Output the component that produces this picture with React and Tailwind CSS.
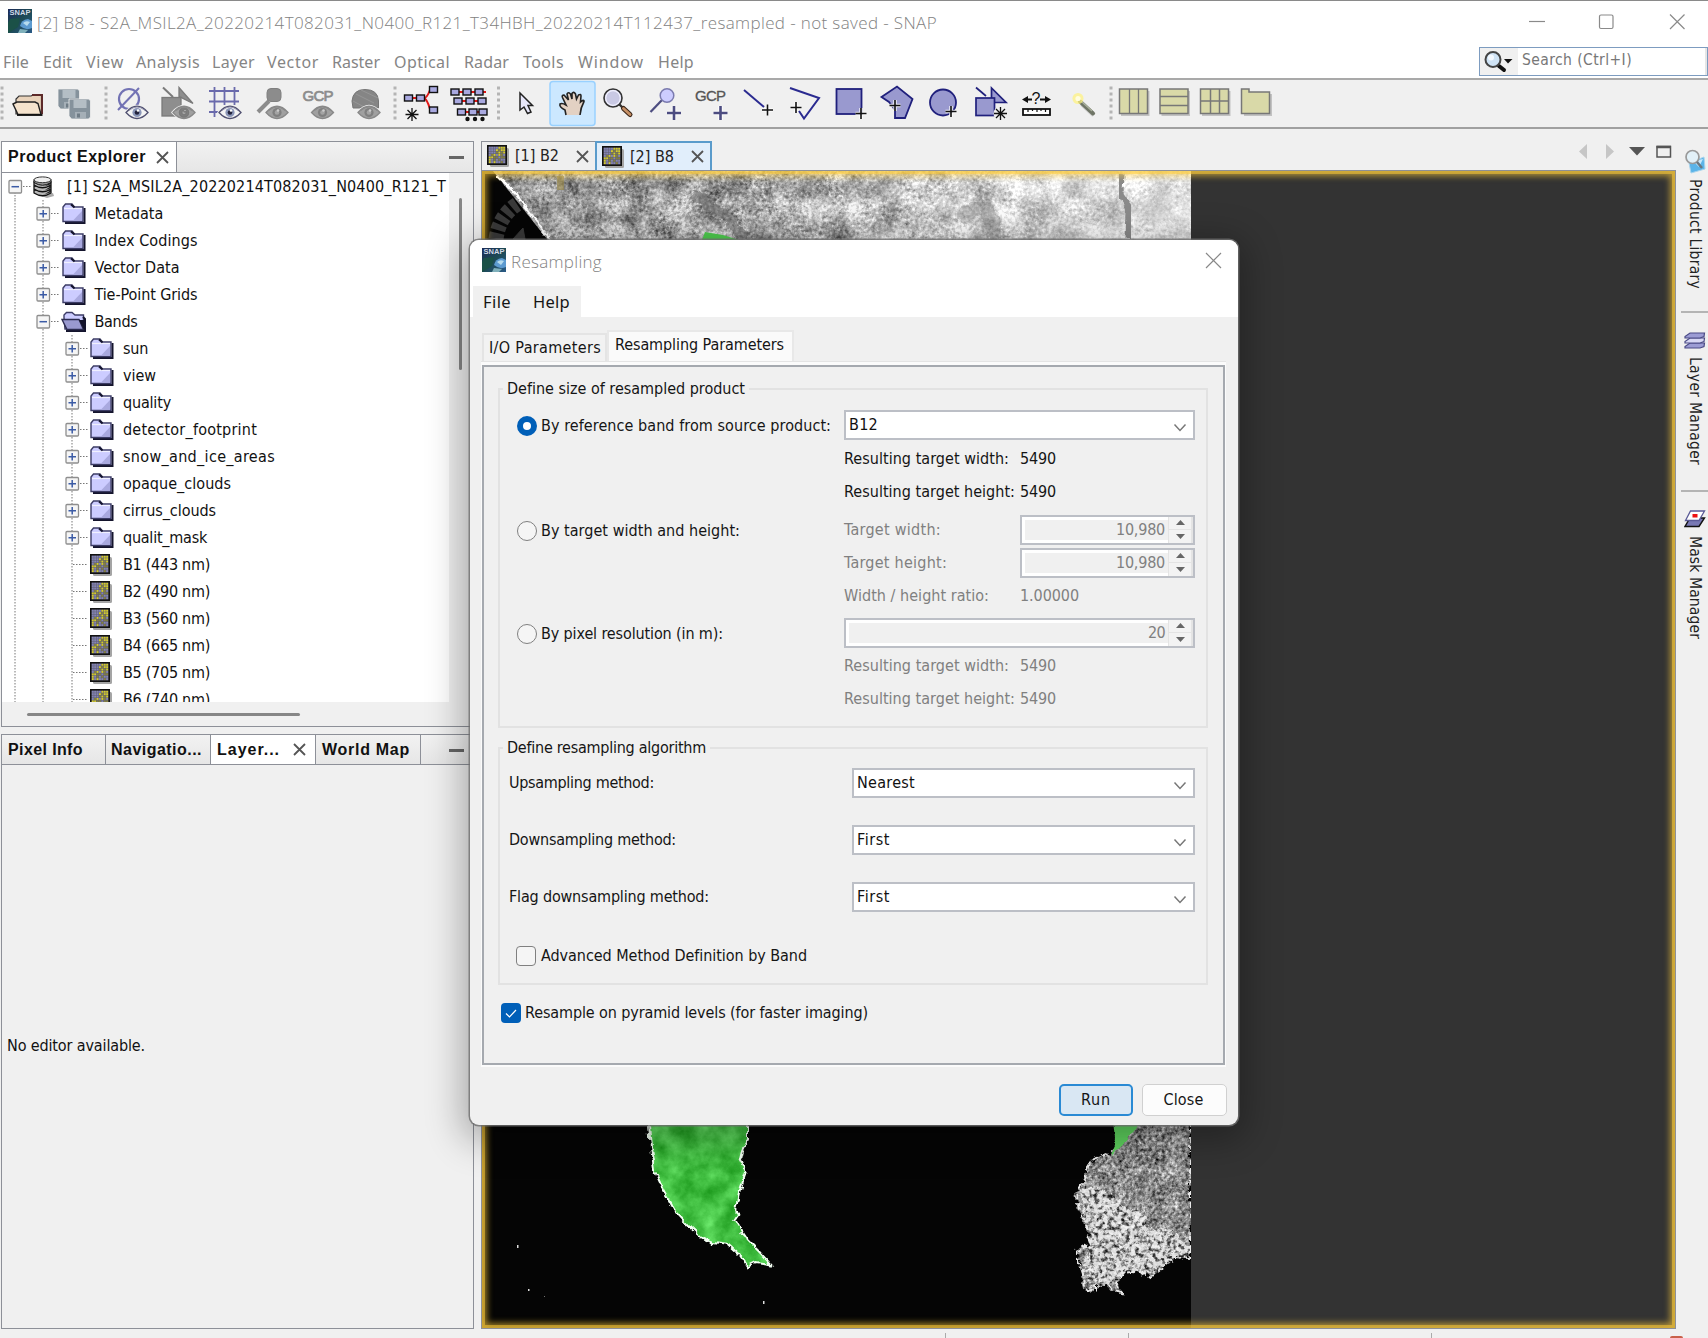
import React, { useLayoutEffect, useRef } from "react";

const UI = "font-['DejaVu_Sans_Condensed','DejaVu_Sans',sans-serif] [font-stretch:condensed]";

/* Text that spreads its letters evenly over a given length. */
function Fit({ w, children, className = "", vertical = false }) {
  const ref = useRef(null);
  useLayoutEffect(() => {
    const el = ref.current;
    el.style.letterSpacing = "0px";
    const r = el.getBoundingClientRect();
    const natural = vertical ? r.height : r.width;
    el.style.letterSpacing = (w - natural) / String(children).length + "px";
  }, [w, children, vertical]);
  return (
    <span ref={ref} className={"inline-block shrink-0 whitespace-pre " + className}>
      {children}
    </span>
  );
}

/* ---------- small icons ---------- */
function SnapLogo() {
  return (
    <svg width="24" height="24" viewBox="0 0 24 24" className="shrink-0">
      <defs>
        <linearGradient id="snapg" x1="0" y1="0" x2="1" y2="1">
          <stop offset="0" stopColor="#1c2b57" />
          <stop offset="0.5" stopColor="#1d4a55" />
          <stop offset="1" stopColor="#2a5a86" />
        </linearGradient>
      </defs>
      <rect width="24" height="24" fill="url(#snapg)" />
      <path d="M2 10 L12 9 L10 18 L0 24 L0 14Z" fill="#1b5147" />
      <path d="M12 17 Q13 11 20 10 L24 12 L24 19 Q18 22 12 17Z" fill="#5d9bd0" />
      <path d="M15 14 Q18 11 22 13 L19 17Z" fill="#b7dcee" />
      <path d="M12 20 L20 21 L17 24 L10 24Z" fill="#7fb0bb" />
      <text x="12" y="6" fontSize="7.5" fontWeight="bold" textAnchor="middle" fill="#cfd8e6" fontFamily="Liberation Sans">SNAP</text>
    </svg>
  );
}

function Folder() {
  return (
    <svg width="24" height="21" viewBox="0 0 24 21" className="shrink-0">
      <path d="M3 20 L22.5 20 L22.5 5" stroke="#14142c" strokeWidth="2" fill="none" />
      <path d="M1 18.5 V4 L3.5 1 H10 L12.5 4 H21 V18.5Z" fill="#ccccff" stroke="#3c3c66" strokeWidth="1.4" />
      <path d="M11 17.5 L20 8 V17.5Z" fill="#a9a9df" />
      <path d="M2 5.5 H20" stroke="#f0f0ff" strokeWidth="1.2" />
      <path d="M9 1.5 L12.5 4.5" stroke="#14142c" strokeWidth="2" />
    </svg>
  );
}

function FolderOpen() {
  return (
    <svg width="26" height="21" viewBox="0 0 26 21" className="shrink-0">
      <path d="M3 7 V4 L5.500 1.500 H11 L14 4 H22.500 V18 H4Z" fill="#ccccff" stroke="#3c3c66" strokeWidth="1.4" />
      <path d="M22 6 L24 8 V20 H5" fill="none" stroke="#14142c" strokeWidth="2" />
      <path d="M1 8.500 H18 L22.500 18.500 H6Z" fill="#9a9ad0" stroke="#2c2c50" strokeWidth="1.4" />
      <path d="M18 9 L23 19 V9Z" fill="#14142c" />
    </svg>
  );
}

const CELLS = ["bbbbyyy", "bbbyoyy", "bbboyoy", "boybyob", "yyooboo", "ybobobb", "ybybbob"];
const CELL_FILL = { b: "#8484b4", y: "#d6cd2a", o: "#87833c" };
function Band() {
  return (
    <svg width="22" height="22" viewBox="0 0 22 22" className="shrink-0">
      <rect x="3" y="3" width="19" height="19" rx="1.500" fill="#a5a5a5" />
      <rect x="0" y="0" width="20" height="20" fill="#111" />
      <rect x="1.600" y="1.600" width="16.800" height="16.800" fill="#5e5e70" />
      {CELLS.map((line, r) =>
        line.split("").map((c, i) => (
          <rect key={r + "-" + i} x={1.8 + i * 2.4} y={1.8 + r * 2.4} width="1.900" height="1.900" fill={CELL_FILL[c]} />
        ))
      )}
    </svg>
  );
}

function Database() {
  return (
    <svg width="22" height="22" viewBox="0 0 22 22" className="shrink-0">
      <path d="M8 20 L20 17 L21 20 L14 22Z" fill="#aaa" />
      {[14, 10, 6].map((y) => (
        <g key={y}>
          <path d={`M1 ${y} v3 q8.500 5.500 17 0 v-3Z`} fill="#b9b9b9" stroke="#111" strokeWidth="1.300" />
          <path d={`M12 ${y + 4} q4 -.5 6 -2 v-2Z`} fill="#222" />
        </g>
      ))}
      <path d="M1 3.500 v3 q8.500 5.500 17 0 v-3Z" fill="#999" stroke="#111" />
      <ellipse cx="9.500" cy="3.800" rx="8.500" ry="2.900" fill="#eee" stroke="#333" />
    </svg>
  );
}

function Cross({ size = 13, className = "" }) {
  return (
    <svg width={size} height={size} viewBox="0 0 13 13" className={"shrink-0 " + className}>
      <path d="M1 1 L12 12 M12 1 L1 12" stroke="#555" strokeWidth="1.800" />
    </svg>
  );
}

/* ---------- toolbar ---------- */
const Eye = ({ x, y, gray }) => (
  <g transform={`translate(${x} ${y})`}>
    <path d="M-11 0 Q0 -12.500 11 0 Q0 12 -11 0Z" fill={gray ? "#a0a0a0" : "#f4f4f4"} stroke="#f0f0f0" strokeWidth="3" />
    <path d="M-11 0 Q0 -12.500 11 0 Q0 12 -11 0Z" fill={gray ? "#a0a0a0" : "#f4f4f4"} stroke={gray ? "#888" : "#505070"} strokeWidth="1.300" />
    <circle r="4.600" fill={gray ? "#808080" : "#8a96b8"} />
    <circle r="2.300" fill={gray ? "#a4a4a4" : "#23233c"} />
    <circle cx="1" cy="-2" r="1.300" fill={gray ? "#ccc" : "#fff"} />
    <path d="M-8 -2 Q0 -9 8 -2" fill="none" stroke={gray ? "#8a8a8a" : "#9a9ab4"} />
  </g>
);
const Plus = ({ x, y, c = "#111", s = 5.5, w = 1.6 }) => (
  <g>
    <path d={`M${x - s} ${y} h${2 * s} M${x} ${y - s} v${2 * s}`} stroke="#fff" strokeWidth={w + 2} opacity="0.8" />
    <path d={`M${x - s} ${y} h${2 * s} M${x} ${y - s} v${2 * s}`} stroke={c} strokeWidth={w} />
  </g>
);
const Star = ({ x, y }) => (
  <path d={`M${x - 6.500} ${y} h13 M${x} ${y - 6.500} v13 M${x - 4.500} ${y - 4.500} l9 9 M${x + 4.500} ${y - 4.500} l-9 9`} stroke="#111" strokeWidth="1.300" />
);
const Node = ({ x, y }) => <rect x={x - 4} y={y - 3} width="8" height="6" fill="#a9a9e0" stroke="#111" strokeWidth="1.400" />;
const Grip = ({ x }) => (
  <g fill="#b4b4b4">
    {[88, 94, 100, 106, 112, 118].map((y) => (
      <rect key={y} x={x - 1.500} y={y - 1.500} width="3" height="3" />
    ))}
  </g>
);
const GridBtn = ({ x, children }) => (
  <g>
    <path d={`M${x + 2} 115 h27.500 v-24`} stroke="#c2c2c2" strokeWidth="2" fill="none" />
    <rect x={x + 0.5} y="89" width="28" height="24.500" fill="#d9d9a8" stroke="#777" strokeWidth="1.500" />
    {children}
  </g>
);

const TOOLS = [
  [0, 8, <Grip x={2} />],
  [8, 44, (
    <g>
      <path d="M16 103 V99 L19 96 H31 L33 95 H41.500 V114 H16Z" fill="#e9d3bb" stroke="#333" strokeWidth="1.200" />
      <path d="M32 95 H42 V114" fill="none" stroke="#5d2a2a" strokeWidth="2" />
      <path d="M13 104 L17 102 H35 L38 103.500 L41 114.500 H18Z" fill="#f5e3cd" stroke="#222" strokeWidth="1.400" />
      <path d="M17 115 H42.500" stroke="#111" strokeWidth="1.800" />
    </g>
  )],
  [52, 48, (
    <g>
      {[[58, 89], [69, 99]].map(([x, y]) => (
        <g key={x}>
          <path d={`M${x} ${y} h20 l1.500 2 v16 l-2 2 h-17 l-2.500 -3Z`} fill="#85929c" stroke="#f0f0f0" strokeWidth="0.800" />
          <rect x={x + 4.500} y={y + 1} width="13" height="8" fill="#b4bec5" />
          <rect x={x + 6} y={y + 13} width="11" height="6" fill="#a5afb7" />
          <rect x={x + 8} y={y + 14.500} width="3" height="4" fill="#6f7c86" />
        </g>
      ))}
    </g>
  )],
  [100, 12, <Grip x={106} />],
  [112, 40, (
    <g>
      <circle cx="129" cy="99" r="10" fill="none" stroke="#7272b4" strokeWidth="2.200" />
      <path d="M118 110 L139 88" stroke="#7272b4" strokeWidth="2" />
      <Eye x={137} y={112.500} />
    </g>
  )],
  [152, 48, (
    <g fill="#8e8e8e" stroke="#7a7a7a" strokeWidth="1.300">
      <path d="M163 87.500 L173 97" strokeWidth="2" />
      <path d="M179 87.500 V97 H180 L193 103.500Z" />
      <rect x="162" y="97.500" width="19" height="18.500" />
      <Eye x={184} y={112.500} gray />
    </g>
  )],
  [200, 48, (
    <g>
      <path d="M209 91 H239 M209 101.500 H239 M209 112 H218 M214.500 87 V117 M224.500 87 V105 M234.500 87 V105" stroke="#6a6aac" strokeWidth="1.800" fill="none" />
      <Eye x={230} y={112.500} />
    </g>
  )],
  [248, 48, (
    <g>
      <rect x="267" y="88.500" width="14" height="13" rx="4" fill="#8c8c8c" stroke="#808080" />
      <path d="M269 101 L258 112" stroke="#8c8c8c" strokeWidth="4" />
      <Eye x={277} y={112.500} gray />
    </g>
  )],
  [296, 44, (
    <g>
      <text x="318" y="100.500" fontSize="15" textAnchor="middle" fontFamily="Liberation Sans" fill="#8c8c8c" stroke="#8c8c8c" strokeWidth="0.700" textLength="31">GCP</text>
      <Eye x={322.500} y={112.500} gray />
    </g>
  )],
  [340, 50, (
    <g>
      <path d="M352 101 Q353 89.500 365 89.500 Q378 89.500 378.500 101 V108 H353Z" fill="#858585" stroke="#757575" />
      <path d="M356 94 L374 103 M353 101 L366 108 M361 90 L378 98" stroke="#969696" />
      <Eye x={369} y={112.500} gray />
    </g>
  )],
  [390, 10, <Grip x={395} />],
  [400, 48, (
    <g>
      <path d="M408 98 H424 Q427 98 430 90 H434 M424 98 Q427 99 430 109 H434" stroke="#e01818" strokeWidth="2" fill="none" />
      <Node x={408.500} y={98} /><Node x={420.500} y={98} /><Node x={433.500} y={89.500} /><Node x={433.500} y={110} />
      <Star x={412} y={114.500} />
    </g>
  )],
  [448, 45, (
    <g>
      <path d="M452 92 H486 M455 101 H486 M460 112 H486" stroke="#e01818" strokeWidth="2" />
      {[455, 467, 479].map((x) => <Node key={x} x={x} y={92} />)}
      {[458, 470, 482].map((x) => <Node key={x} x={x} y={101} />)}
      {[461.500, 473, 483].map((x) => <Node key={x} x={x} y={112} />)}
      {[467.500, 475, 482.500].map((x) => <circle key={x} cx={x} cy="119" r="2.200" fill="#111" />)}
    </g>
  )],
  [493, 11, <Grip x={498.500} />],
  [504, 45, (
    <path d="M520 93 V110 L524 107 L527.500 113.500 L531 112 L528 105.500 H532.500Z" fill="#e8e8fb" stroke="#222" strokeWidth="1.500" />
  )],
  [549, 47, (
    <g>
      <rect x="550" y="81.500" width="45" height="44" rx="3" fill="#cce8ff" stroke="#99d1ff" strokeWidth="1.500" />
      <path d="M566 115 L565 110 Q559 107 560 104 Q562 102.500 566 105 L562.500 97.500 Q561.500 95 564 95 L568.500 100 L567 94 Q568 91.500 570.500 94 L572 99 V93.500 Q573.500 91 575.500 94 L576.500 99 L578.500 95 Q581 93.500 581 96 L580.500 102 Q584 99 584 101.500 Q580.500 108 580 115" fill="#e3d1c3" stroke="#222" strokeWidth="1.600" />
    </g>
  )],
  [596, 46, (
    <g>
      <circle cx="613" cy="98" r="9" fill="#c9c9e4" stroke="#333" strokeWidth="1.600" />
      <circle cx="613" cy="98" r="7.300" fill="none" stroke="#f2f2ff" strokeWidth="1.200" />
      <path d="M619.500 104.500 L623 108" stroke="#333" strokeWidth="2.400" />
      <path d="M623.500 108.500 L630 114.500" stroke="#3b2618" strokeWidth="5" strokeLinecap="round" />
      <path d="M623.500 108.500 L630 114.500" stroke="#c79066" strokeWidth="2.800" strokeLinecap="round" />
    </g>
  )],
  [642, 46, (
    <g>
      <path d="M650.500 112 L662 100" stroke="#4d4d80" strokeWidth="2.200" />
      <circle cx="667" cy="95.500" r="6.800" fill="#ccccff" stroke="#7a7aae" strokeWidth="1.500" />
      <Plus x={674} y={113} c="#4c4c80" s={7} w={2.600} />
    </g>
  )],
  [688, 46, (
    <g>
      <text x="710.500" y="100.500" fontSize="15" textAnchor="middle" fontFamily="Liberation Sans" fill="#555" stroke="#555" strokeWidth="0.300" textLength="31">GCP</text>
      <Plus x={720.500} y={113} c="#4c4c80" s={7} w={2.600} />
    </g>
  )],
  [734, 46, (
    <g>
      <path d="M744 90 L764 107" stroke="#2a2a90" strokeWidth="2" />
      <Plus x={767.500} y={110} />
    </g>
  )],
  [780, 47, (
    <g>
      <path d="M790 88 L819 98 L804 118.500 L799 111" stroke="#2a2a90" strokeWidth="2" fill="none" />
      <Plus x={796} y={107.500} />
    </g>
  )],
  [827, 46, (
    <g>
      <rect x="836.500" y="89" width="25" height="25" fill="#9999cf" stroke="#20207c" strokeWidth="1.800" />
      <Plus x={861} y={113.500} />
    </g>
  )],
  [873, 47, (
    <g>
      <path d="M881.500 97 L897 86.500 L912.500 99 L905 118 H895 V110 L889 102Z" fill="#9999cf" stroke="#20207c" strokeWidth="1.800" />
      <Plus x={895} y={105.500} />
    </g>
  )],
  [920, 46, (
    <g>
      <circle cx="943" cy="102.500" r="13" fill="#9999cf" stroke="#20207c" strokeWidth="1.800" />
      <Plus x={951} y={111.500} />
    </g>
  )],
  [966, 48, (
    <g fill="#9999cf" stroke="#20207c" strokeWidth="1.700">
      <path d="M976 87.500 L986 96" />
      <path d="M991.500 88 V102.500 H1006Z" />
      <rect x="976" y="98" width="18.500" height="17.500" />
      <circle cx="1000.500" cy="113.500" r="7" fill="#f0f0f0" stroke="none" />
      <Star x={1000.500} y={113.500} />
    </g>
  )],
  [1014, 46, (
    <g>
      <path d="M1025 99.500 H1032 M1040 99.500 H1048" stroke="#111" strokeWidth="1.800" />
      <path d="M1022 99.500 L1028 96 V103Z M1051 99.500 L1045 96 V103Z" fill="#111" />
      <text x="1036" y="104" fontSize="16" textAnchor="middle" fontFamily="Liberation Sans" fill="#111">?</text>
      <rect x="1023" y="109" width="27" height="6" fill="#fff" stroke="#111" strokeWidth="1.800" />
      <path d="M1028 109 v3 M1032.500 109 v2 M1037 109 v3 M1041 109 v2 M1045.500 109 v3" stroke="#111" strokeWidth="1.200" />
    </g>
  )],
  [1060, 45, (
    <g>
      <path d="M1082 104 L1094 115" stroke="#cfcfcf" strokeWidth="5" />
      <path d="M1080 101.500 L1093 113.500" stroke="#6f7566" strokeWidth="4" strokeLinecap="round" />
      <path d="M1081 101 L1092 111" stroke="#a9b09c" strokeWidth="1.400" />
      <circle cx="1078" cy="98.500" r="5.500" fill="#fff27a" opacity="0.7" />
      <circle cx="1078" cy="98.500" r="2.600" fill="#fffde0" />
    </g>
  )],
  [1105, 11, <Grip x={1111} />],
  [1116, 42, <GridBtn x={1119}><path d="M1129.500 89 V113 M1138.500 89 V113" stroke="#777" strokeWidth="1.300" /></GridBtn>],
  [1158, 40, <GridBtn x={1159.500}><path d="M1160 96.500 H1188 M1160 105.500 H1188" stroke="#777" strokeWidth="1.500" /></GridBtn>],
  [1198, 40, <GridBtn x={1200}><path d="M1201 101 H1229 M1210.500 89 V113 M1219.500 89 V113" stroke="#777" strokeWidth="1.500" /></GridBtn>],
  [1238, 40, (
    <g>
      <path d="M1244 115 H1271 V94" fill="none" stroke="#c2c2c2" strokeWidth="2" />
      <path d="M1241.500 113.500 V89 H1249 V92 H1269.500 V113.500Z" fill="#d9d9a8" stroke="#777" strokeWidth="1.500" />
    </g>
  )],
];

function Toolbar() {
  return (
    <div className="flex h-[51px] shrink-0 border-t-2 border-b-2 border-t-[#a9a9a9] border-b-[#a0a0a0] bg-[#f0f0f0]">
      {TOOLS.map(([x, w, art]) => (
        <svg key={x} width={w} height="47" viewBox={`${x} 80 ${w} 47`} className="shrink-0 overflow-visible">{art}</svg>
      ))}
    </div>
  );
}

/* ---------- title and menu ---------- */
const MENU = [["File", 26, "ml-[3px]"], ["Edit", 29, "ml-[14px]"], ["View", 38, "ml-[14px]"], ["Analysis", 64, "ml-[12px]"], ["Layer", 43, "ml-[12px]"], ["Vector", 52, "ml-[12px]"], ["Raster", 48, "ml-[13px]"], ["Optical", 56, "ml-[14px]"], ["Radar", 45, "ml-[14px]"], ["Tools", 41, "ml-[14px]"], ["Window", 66, "ml-[14px]"], ["Help", 36, "ml-[14px]"]];

function TitleBar() {
  return (
    <div className="flex h-[46px] shrink-0 items-start border-t border-[#8a8a8a] bg-white pl-2 pt-2">
      <SnapLogo />
      <Fit w={900} className="ml-[5px] text-[17px] leading-[27px] text-[#828282] font-['Open_Sans','Noto_Sans',sans-serif] font-light">
        [2] B8 - S2A_MSIL2A_20220214T082031_N0400_R121_T34HBH_20220214T112437_resampled - not saved - SNAP
      </Fit>
      <svg width="160" height="18" viewBox="0 0 160 18" className="ml-auto mr-[21px] mt-1" fill="none" stroke="#8a8a8a" strokeWidth="1.200">
        <path d="M2 8.500 H18" />
        <rect x="72.500" y="2" width="13.500" height="13.500" rx="1.500" />
        <path d="M143 1.500 L157.500 16 M157.500 1.500 L143 16" />
      </svg>
    </div>
  );
}

function MenuBar() {
  return (
    <div className="flex h-[32px] shrink-0 bg-white">
      <div className="flex items-center text-[16px] text-[#858585] font-['Noto_Sans','Open_Sans',sans-serif]">
        {MENU.map(([t, w, m]) => (
          <Fit key={t} w={w} className={"leading-[34px] " + m}>{t}</Fit>
        ))}
      </div>
      <div className="ml-auto mt-[1px] flex h-[29px] w-[229px] border border-[#7d9cc0] bg-[#f0f0f0]">
        <svg width="38" height="27" viewBox="0 0 38 27">
          <path d="M19 18 L24 22" stroke="#111" strokeWidth="4" strokeLinecap="round" />
          <circle cx="13" cy="11.500" r="7.500" fill="#cfe3f5" stroke="#444" strokeWidth="2" />
          <circle cx="11" cy="9.500" r="3" fill="#f3f9ff" />
          <path d="M24 11 H32.500 L28 15.500Z" fill="#111" />
        </svg>
        <div className={"flex flex-1 items-center border-r-2 border-[#e6e6e6] bg-white pb-[2px] pl-[4px] text-[15.500px] text-[#777] " + UI}>
          <Fit w={110}>Search (Ctrl+I)</Fit>
        </div>
      </div>
    </div>
  );
}

/* ---------- product tree ---------- */
const TREE = [
  [0, "-", "db", "[1] S2A_MSIL2A_20220214T082031_N0400_R121_T", 379],
  [1, "+", "f", "Metadata", 69],
  [1, "+", "f", "Index Codings", 103],
  [1, "+", "f", "Vector Data", 85],
  [1, "+", "f", "Tie-Point Grids", 103],
  [1, "-", "o", "Bands", 43],
  [2, "+", "f", "sun", 25],
  [2, "+", "f", "view", 33],
  [2, "+", "f", "quality", 48],
  [2, "+", "f", "detector_footprint", 134],
  [2, "+", "f", "snow_and_ice_areas", 152],
  [2, "+", "f", "opaque_clouds", 108],
  [2, "+", "f", "cirrus_clouds", 93],
  [2, "+", "f", "qualit_mask", 84],
  [2, "", "b", "B1 (443 nm)", 87],
  [2, "", "b", "B2 (490 nm)", 87],
  [2, "", "b", "B3 (560 nm)", 87],
  [2, "", "b", "B4 (665 nm)", 87],
  [2, "", "b", "B5 (705 nm)", 87],
  [2, "", "b", "B6 (740 nm)", 87],
];

/* One indent step of the tree, with the dotted guide in its middle. */
function Guide({ mark, node, first }) {
  return (
    <svg width="28.500" height="27" viewBox="0 0 28.500 27" className="shrink-0 overflow-visible">
      <path d={first ? "M14 13 V27" : "M14 0 V27"} stroke="#777" strokeWidth="1" strokeDasharray="1.500 1.500" />
      {node && <path d={mark ? "M22 13.500 H30" : "M15 13.500 H30"} stroke="#777" strokeDasharray="1.500 1.500" />}
      {mark && (
        <g>
          <rect x="8" y="7.500" width="12.500" height="12.500" rx="1" fill="#f5f5f5" stroke="#8e8e8e" strokeWidth="1.300" />
          <path d={mark === "+" ? "M10.500 13.700 H18 M14.200 10 V17.500" : "M10.500 13.700 H18"} stroke="#3b5ba5" strokeWidth="1.500" />
        </g>
      )}
    </svg>
  );
}

function TreeRow({ row, first }) {
  const [level, mark, icon, text, w] = row;
  return (
    <div className="-ml-[1.5px] flex h-[27px] items-center">
      {[0, 1, 2].slice(0, level + 1).map((l) => (
        <Guide key={l} node={l === level} mark={l === level ? mark : ""} first={first} />
      ))}
      <div className={"flex shrink-0 items-center " + (icon === "db" ? "w-[38px] pl-[4px]" : icon === "o" ? "w-[37px] pl-[3px]" : "w-[37px] pl-[4px]")}>
        {icon === "db" && <Database />}
        {icon === "f" && <Folder />}
        {icon === "o" && <FolderOpen />}
        {icon === "b" && <Band />}
      </div>
      <Fit w={w}>{text}</Fit>
    </div>
  );
}

function PanelTab({ children, className = "" }) {
  return <div className={"flex items-center border-r border-[#8d9098] " + className}>{children}</div>;
}

const HEADER = "flex shrink-0 border-b border-[#8d9098] bg-gradient-to-b from-[#f2f2f2] to-[#e6e6e6] font-['Liberation_Sans',sans-serif] text-[16px] font-bold text-[#111]";

function LeftColumn() {
  return (
    <div className="flex w-[474px] shrink-0 flex-col pl-[1px] pt-[12px]">
      <div className="flex h-[586px] flex-col border border-[#8d9098]">
        <div className={"h-[31px] " + HEADER}>
          <PanelTab className="w-[175px] bg-white pl-[6px]">
            <Fit w={138}>Product Explorer</Fit>
            <Cross className="ml-[10px]" />
          </PanelTab>
          <div className="ml-auto mr-[9px] mt-[14px] h-[3px] w-[15px] bg-[#666]" />
        </div>
        <div className="flex h-[529px] shrink-0">
          <div className={"w-[447px] overflow-hidden bg-white text-[16px] leading-[27px] text-[#111] " + UI}>
            {TREE.map((r, i) => (
              <TreeRow key={r[3]} row={r} first={i === 0} />
            ))}
          </div>
          <div className="ml-[10px] mt-[25px] h-[172px] w-[3px] rounded bg-[#868686]" />
        </div>
        <div className="ml-[25px] mt-[11px] h-[3px] w-[273px] rounded bg-[#868686]" />
      </div>
      <div className="mt-[7px] flex h-[595px] flex-col border border-[#8d9098]">
        <div className={"h-[30px] " + HEADER}>
          <PanelTab className="w-[104px] pl-[6px]"><Fit w={75}>Pixel Info</Fit></PanelTab>
          <PanelTab className="w-[105px] pl-[5px]"><Fit w={91}>Navigatio...</Fit></PanelTab>
          <PanelTab className="w-[105px] bg-white pl-[6px]"><Fit w={63}>Layer...</Fit><Cross className="ml-[13px]" /></PanelTab>
          <PanelTab className="w-[105px] pl-[6px]"><Fit w={88}>World Map</Fit></PanelTab>
          <div className="ml-auto mr-[9px] mt-[14px] h-[3px] w-[15px] bg-[#666]" />
        </div>
        <div className={"flex flex-1 items-center pb-[1px] pl-[5px] text-[16px] text-[#111] " + UI}>
          <Fit w={138}>No editor available.</Fit>
        </div>
      </div>
    </div>
  );
}

/* ---------- satellite scene ---------- */
const GREEN = "651,1100 651,1125 653,1150 656,1170 665,1190 675,1208 678,1213 692,1228 703,1238 715,1243 730,1245 742,1256 749,1267 757,1263 770,1265 760,1254 748,1242 740,1230 735,1222 739,1216 735,1212 740,1190 746,1172 740,1160 742,1152 748,1140 748,1100";
const LAND = "1130,1100 1192,1100 1192,1259 1175,1258 1160,1272 1152,1278 1140,1272 1125,1274 1118,1283 1122,1294 1114,1292 1106,1282 1096,1284 1096,1293 1085,1290 1084,1275 1077,1252 1091,1246 1086,1225 1080,1212 1077,1192 1085,1182 1089,1168 1095,1160 1110,1155 1125,1142";
const BRIGHT_LAND = "1080,1186 1100,1188 1118,1200 1130,1210 1146,1214 1150,1232 1165,1226 1180,1240 1192,1245 1192,1259 1175,1258 1155,1275 1125,1272 1112,1284 1090,1290 1084,1262 1092,1246 1084,1215";

function Scene() {
  return (
    <svg width="709" height="1157" viewBox="483 172 709 1157" className="block shrink-0 bg-[#050505]">
      <defs>
        <filter id="rock" x="0" y="0" width="100%" height="100%" colorInterpolationFilters="sRGB">
          <feTurbulence type="fractalNoise" baseFrequency="0.040" numOctaves="4" seed="11" result="big" />
          <feTurbulence type="fractalNoise" baseFrequency="0.300" numOctaves="3" seed="5" result="fine" />
          <feComposite in="big" in2="fine" operator="arithmetic" k2="0.550" k3="0.500" result="mix" />
          <feColorMatrix in="mix" values="1.900 0.600 0 0 -0.620  1.900 0.600 0 0 -0.620  1.900 0.600 0 0 -0.620  0 0 0 0 1" result="n" />
          <feComposite in="n" in2="SourceGraphic" operator="in" />
        </filter>
        <filter id="coast" x="-10%" y="-10%" width="120%" height="120%" colorInterpolationFilters="sRGB">
          <feTurbulence type="fractalNoise" baseFrequency="0.060" numOctaves="4" seed="4" result="t" />
          <feTurbulence type="fractalNoise" baseFrequency="0.300" numOctaves="3" seed="9" result="fine" />
          <feComposite in="t" in2="fine" operator="arithmetic" k2="0.300" k3="0.700" result="mix" />
          <feColorMatrix in="mix" values="1.300 0.500 0 0 -0.360  1.300 0.500 0 0 -0.360  1.300 0.500 0 0 -0.360  0 0 0 0 1" result="n" />
          <feTurbulence type="fractalNoise" baseFrequency="0.150" numOctaves="3" seed="8" result="d" />
          <feDisplacementMap in="SourceGraphic" in2="d" scale="9" xChannelSelector="R" yChannelSelector="G" result="s" />
          <feComposite in="n" in2="s" operator="in" />
        </filter>
        <filter id="shore" x="-10%" y="-10%" width="120%" height="120%" colorInterpolationFilters="sRGB">
          <feTurbulence type="fractalNoise" baseFrequency="0.220" numOctaves="3" seed="31" />
          <feColorMatrix values="3 1 0 0 -1.150  3 1 0 0 -1.150  3 1 0 0 -1.150  0 0 0 0 1" result="n" />
          <feTurbulence type="fractalNoise" baseFrequency="0.150" numOctaves="3" seed="8" result="d" />
          <feDisplacementMap in="SourceGraphic" in2="d" scale="12" xChannelSelector="R" yChannelSelector="G" result="s" />
          <feComposite in="n" in2="s" operator="in" />
        </filter>
        <filter id="jag" x="-5%" y="-5%" width="110%" height="110%">
          <feTurbulence type="fractalNoise" baseFrequency="0.120" numOctaves="3" seed="3" result="d" />
          <feDisplacementMap in="SourceGraphic" in2="d" scale="7" xChannelSelector="R" yChannelSelector="G" />
        </filter>
        <filter id="veg" x="-5%" y="-5%" width="110%" height="110%" colorInterpolationFilters="sRGB">
          <feTurbulence type="fractalNoise" baseFrequency="0.050" numOctaves="6" seed="21" />
          <feColorMatrix values="0.450 0 0 0 0.040  0.450 0 0 0 0.530  0.450 0 0 0 0.040  0 0 0 0 1" result="n" />
          <feTurbulence type="fractalNoise" baseFrequency="0.120" numOctaves="3" seed="3" result="d" />
          <feDisplacementMap in="SourceGraphic" in2="d" scale="7" xChannelSelector="R" yChannelSelector="G" result="s" />
          <feComposite in="n" in2="s" operator="in" />
        </filter>
        <linearGradient id="bright" x1="0" y1="0" x2="1" y2="0">
          <stop offset="0" stopColor="#888" stopOpacity="0.35" />
          <stop offset="0.35" stopColor="#bbb" stopOpacity="0.25" />
          <stop offset="0.6" stopColor="#fff" stopOpacity="0.4" />
          <stop offset="1" stopColor="#fff" stopOpacity="0.7" />
        </linearGradient>
      </defs>
      <polygon points="494,172 1193,172 1193,250 556,250" fill="#fff" filter="url(#rock)" />
      <polygon points="494,172 1193,172 1193,250 556,250" fill="url(#bright)" />
      <path d="M1122 175 L1121 195 L1131 210 L1130 240" stroke="#8a8a8a" strokeWidth="7" fill="none" filter="url(#jag)" />
      <path d="M694 194 L710 207 L728 216 L745 240" stroke="#6f6f6f" strokeWidth="10" opacity="0.600" fill="none" filter="url(#jag)" />
      <path d="M960 220 L985 205 L1000 240" stroke="#777" strokeWidth="16" opacity="0.350" fill="none" filter="url(#jag)" />
      <path d="M498 176 L516 194 L532 216 L554 244" stroke="#fff" strokeWidth="2.500" fill="none" filter="url(#jag)" />
      <g stroke="#3a3a3a" fill="none">
        <path d="M497 240 Q500 216 520 204" strokeWidth="15" strokeDasharray="6 3" />
        <path d="M514 240 L524 229 L526 240Z" fill="#3a3a3a" />
      </g>
      <polygon points="703,241 706,233 724,236 740,241" fill="#4fd04f" />
      <rect x="558" y="177" width="7" height="14" fill="#9a8a50" opacity="0.700" />

      <polygon points={GREEN} fill="none" stroke="#f3fff3" strokeWidth="4" filter="url(#jag)" />
      <polygon points={GREEN} fill="#3fc13f" filter="url(#veg)" />
      <polygon points={LAND} fill="#fff" filter="url(#coast)" />
      <polygon points={BRIGHT_LAND} fill="#fff" filter="url(#shore)" opacity="0.750" />
      <polygon points={LAND} fill="none" stroke="#e8e8e8" strokeWidth="2" strokeDasharray="7 4" filter="url(#jag)" />
      <polygon points="1112,1100 1140,1100 1138,1127 1128,1142 1112,1157 1116,1140" fill="#5fd45f" filter="url(#jag)" />
      <g fill="#ddd">
        <rect x="518" y="1246" width="1.500" height="3" />
        <rect x="529" y="1290" width="1.500" height="2" />
        <rect x="764" y="1302" width="1.500" height="3" />
        <rect x="545" y="1297" width="1" height="1" opacity="0.500" />
      </g>
    </svg>
  );
}

function Editor() {
  return (
    <div className="ml-[7px] flex w-[1195px] shrink-0 flex-col pt-[12px]">
      <div className="flex h-[29px] shrink-0">
        <div className={"flex w-[114px] items-center border border-b-0 border-r-0 border-[#8d9098] bg-[#efefef] pl-[5px] text-[16px] text-[#222] " + UI}>
          <Band /><Fit w={44} className="ml-[6px]">[1] B2</Fit><Cross className="ml-[17px]" />
        </div>
        <div className={"flex w-[117px] items-center border-2 border-b-0 border-[#5a9bcb] bg-[#e1eefb] pl-[5px] text-[16px] text-[#222] " + UI}>
          <Band /><Fit w={44} className="ml-[6px]">[2] B8</Fit><Cross className="ml-[17px]" />
        </div>
        <svg width="96" height="20" viewBox="0 0 96 20" className="ml-auto mr-[2px] mt-[3px]">
          <path d="M9 -1 V14 L1 6.500Z M28 -1 V14 L36 6.500Z" transform="translate(0 1)" fill="#c6c6c6" />
          <path d="M51 3 H67 L59 11.500Z" fill="#555" />
          <rect x="79" y="2.500" width="13.500" height="10.500" fill="none" stroke="#555" strokeWidth="1.500" />
          <path d="M78.500 3 H93" stroke="#555" strokeWidth="2.500" />
        </svg>
      </div>
      <div className="relative flex h-[1159px] shrink-0 border border-[#8d9098] bg-[#333]">
        <Scene />
        <div className="absolute inset-0 shadow-[inset_0_0_0_3px_rgba(255,205,60,0.5),inset_0_0_6px_5px_rgba(255,205,60,0.6)]" />
      </div>
    </div>
  );
}

/* ---------- docked windows on the right edge ---------- */
function SideBar() {
  const txt = "[writing-mode:vertical-rl] text-[15.500px] leading-[20px] text-[#222] " + UI;
  return (
    <div className="flex flex-1 flex-col items-center pl-[5px] pt-[20px]">
      <svg width="24" height="26" viewBox="0 0 24 26">
        <path d="M6 14 L21 8 L22 20 L8 24Z" fill="#5bb4e8" stroke="#a8d4ee" />
        <path d="M10 12 L16 18 L20 10Z" fill="#c8e8fb" />
        <circle cx="9.500" cy="8" r="6.500" fill="#e3f1f8" stroke="#9a9a9a" strokeWidth="1.700" />
        <path d="M14 13 L19 19" stroke="#6b7880" strokeWidth="2.500" />
      </svg>
      <Fit w={110} vertical className={"mt-[4px] " + txt}>Product Library</Fit>
      <div className="mt-[22px] h-[2px] w-full bg-[#b4b4b4]" />
      <svg width="22" height="18" viewBox="0 0 22 18" className="mt-[19px]">
        {[11, 6, 1].map((y) => (
          <path key={y} d={`M6 ${y} H20.500 L20 ${y + 3.500} L16 ${y + 5} H1 V${y + 3.500}Z`} fill={y === 6 ? "#d8d8f4" : "#9c9cd4"} stroke="#4b4b86" strokeWidth="1.200" />
        ))}
      </svg>
      <Fit w={108} vertical className={"mt-[7px] " + txt}>Layer Manager</Fit>
      <div className="mt-[25px] h-[2px] w-full bg-[#b4b4b4]" />
      <svg width="22" height="18" viewBox="0 0 22 18" className="mt-[18px]">
        <path d="M6 8 H20.500 L15 16.500 H1Z" fill="#7878b4" stroke="#111" strokeWidth="1.400" />
        <path d="M6.500 1 H20.500 L15 10.500 H1.500Z" fill="#fff" stroke="#5a5a96" strokeWidth="1.300" />
        <rect x="8.500" y="4" width="5" height="3.500" fill="#e11" />
      </svg>
      <Fit w={103} vertical className={"mt-[8px] " + txt}>Mask Manager</Fit>
    </div>
  );
}

/* ---------- resampling dialog ---------- */
function Combo({ value, w, className }) {
  return (
    <div className={"flex h-[30px] items-center justify-between border-2 border-[#bcbfc6] bg-white pl-[3px] pr-[6px] " + className}>
      <Fit w={w} className="-mt-[1px] text-[#111]">{value}</Fit>
      <svg width="14" height="10" viewBox="0 0 14 10" className="mt-[5px]">
        <path d="M1.500 1.500 L7 7.500 L12.500 1.500" fill="none" stroke="#777" strokeWidth="1.500" />
      </svg>
    </div>
  );
}

function Spinner({ value, w, className }) {
  return (
    <div className={"flex h-[30px] border-2 border-[#bcbfc6] bg-white " + className}>
      <div className="m-[3px] mr-0 flex flex-1 items-center justify-end bg-[#f0f0f0] pr-[3px]">
        <Fit w={w}>{value}</Fit>
      </div>
      <div className="flex w-[25px] flex-col gap-[1px] bg-[#e4e4e4] pl-[1px] pr-[2px]">
        <div className="flex flex-1 items-center justify-center bg-[#f3f3f3]"><svg width="9" height="5" viewBox="0 0 9 5"><path d="M0 5 L4.500 0 L9 5Z" fill="#666" /></svg></div>
        <div className="flex flex-1 items-center justify-center bg-[#f3f3f3]"><svg width="9" height="5" viewBox="0 0 9 5"><path d="M0 0 L4.500 5 L9 0Z" fill="#666" /></svg></div>
      </div>
    </div>
  );
}

function Radio({ on, label, w }) {
  return (
    <div className={"flex w-[329px] shrink-0 items-center pl-[2px] " + (on ? "" : "pt-[3px]")}>
      {on ? (
        <div className="size-[20px] rounded-full border-[6px] border-[#005fb8] bg-white" />
      ) : (
        <div className="size-[20px] rounded-full border-[1.5px] border-[#808080] bg-[#f5f5f5]" />
      )}
      <Fit w={w} className="ml-[4px]">{label}</Fit>
    </div>
  );
}

function SizeRow({ radio, label, lw, children, gray, className = "h-[33px]" }) {
  return (
    <div className={"flex items-center " + className}>
      {radio || <div className="w-[329px] shrink-0" />}
      <div className={"flex w-[176px] shrink-0 " + (gray ? "text-[#808080]" : "")}><Fit w={lw}>{label}</Fit></div>
      <div className={"flex flex-1 " + (gray ? "text-[#808080]" : "")}>{children}</div>
    </div>
  );
}

function Group({ title, w, className, children }) {
  return (
    <fieldset className={"min-w-0 border-2 border-[#e2e2e2] " + className}>
      <legend className="ml-[3px] h-[22px] px-[4px] leading-[22px]"><Fit w={w}>{title}</Fit></legend>
      {children}
    </fieldset>
  );
}

function Method({ label, lw, value, vw, className }) {
  return (
    <div className={"flex items-center pl-[9px] " + className}>
      <div className="w-[343px]"><Fit w={lw}>{label}</Fit></div>
      <Combo value={value} w={vw} className="w-[343px]" />
    </div>
  );
}

function Dialog() {
  return (
    <div className={"absolute left-[470px] top-[240px] flex h-[885px] w-[768px] flex-col overflow-hidden rounded-[9px] bg-[#f0f0f0] text-[16px] leading-[22px] text-[#151515] shadow-[0_0_0_1.5px_rgba(110,110,110,0.8),0_8px_36px_8px_rgba(0,0,0,0.3)] " + UI}>
      <div className="flex h-[46px] shrink-0 items-start bg-white pl-[12px] pt-[8px]">
        <SnapLogo />
        <Fit w={91} className="ml-[5px] text-[17px] leading-[27px] text-[#828282] font-['Open_Sans','Noto_Sans',sans-serif] font-light [font-stretch:normal]">Resampling</Fit>
        <svg width="17" height="17" viewBox="0 0 17 17" className="ml-auto mr-[16px] mt-[4px]"><path d="M1 1 L16 16 M16 1 L1 16" stroke="#888" strokeWidth="1.200" /></svg>
      </div>
      <div className="h-[31px] shrink-0 bg-white pl-[3px]">
        <div className="flex h-full w-[108px] items-center bg-[#f0f0f0] pl-[10px] text-[16.500px] font-['Noto_Sans',sans-serif] [font-stretch:normal]">
          <Fit w={28}>File</Fit><Fit w={37} className="ml-[22px]">Help</Fit>
        </div>
      </div>
      <div className="ml-[12px] mt-[13px] flex h-[31px] shrink-0 items-end">
        <div className="flex h-[28px] w-[125px] items-center border-2 border-b-0 border-[#e4e4e4] bg-[#f2f2f2] pl-[5px]"><Fit w={112}>I/O Parameters</Fit></div>
        <div className="flex h-[31px] w-[187px] items-center border-2 border-b-0 border-[#e8e8e8] bg-[#fafafa] pb-[3px] pl-[6px]"><Fit w={169}>Resampling Parameters</Fit></div>
      </div>
      <div className="ml-[11px] h-[706px] w-[745px] shrink-0 border-t border-[#e4e4e4] bg-[#fbfbfb] px-[1px] pt-[3px] pb-[2px]">
        <div className="h-full border-2 border-[#a5a9af] bg-[#f0f0f0] pl-[14px] pr-[14px] pt-[11px]">
          <Group title="Define size of resampled product" w={238} className="h-[350px] w-[710px]">
            <div className="mt-[10px] pl-[15px]">
              <div className="flex h-[32px] items-center">
                <Radio on label="By reference band from source product:" w={290} />
                <Combo value="B12" w={29} className="-mt-[2px] w-[351px]" />
              </div>
              <SizeRow label="Resulting target width:" lw={165}><Fit w={36}>5490</Fit></SizeRow>
              <SizeRow label="Resulting target height:" lw={171}><Fit w={36}>5490</Fit></SizeRow>
              <SizeRow className="mt-[5px] h-[33px]" radio={<Radio label="By target width and height:" w={199} />} label="Target width:" lw={97} gray><Spinner value="10,980" w={49} className="w-[175px]" /></SizeRow>
              <SizeRow label="Target height:" lw={103} gray><Spinner value="10,980" w={49} className="w-[175px]" /></SizeRow>
              <SizeRow label="Width / height ratio:" lw={145} gray><Fit w={59}>1.00000</Fit></SizeRow>
              <div className="mt-[4px] flex h-[33px] items-center">
                <Radio label="By pixel resolution (in m):" w={182} />
                <Spinner value="20" w={17} className="w-[351px] text-[#808080]" />
              </div>
              <SizeRow label="Resulting target width:" lw={165} gray><Fit w={36}>5490</Fit></SizeRow>
              <SizeRow label="Resulting target height:" lw={171} gray><Fit w={36}>5490</Fit></SizeRow>
            </div>
          </Group>
          <Group title="Define resampling algorithm" w={199} className="mt-[9px] h-[248px] w-[710px]">
            <Method className="mt-[9px]" label="Upsampling method:" lw={145} value="Nearest" vw={58} />
            <Method className="mt-[27px]" label="Downsampling method:" lw={167} value="First" vw={33} />
            <Method className="mt-[27px]" label="Flag downsampling method:" lw={200} value="First" vw={33} />
            <div className="mt-[33px] flex items-center pl-[16px]">
              <div className="size-[20px] rounded-[4px] border-[1.5px] border-[#808080] bg-[#f5f5f5]" />
              <Fit w={266} className="ml-[5px]">Advanced Method Definition by Band</Fit>
            </div>
          </Group>
          <div className="mt-[17px] flex items-center pl-[3px]">
            <div className="flex size-[20px] items-center justify-center rounded-[4px] bg-[#005fb8]">
              <svg width="12" height="9" viewBox="0 0 12 9"><path d="M1 4.500 L4.500 8 L11 1" fill="none" stroke="#fff" strokeWidth="1.200" /></svg>
            </div>
            <Fit w={343} className="ml-[4px]">Resample on pyramid levels (for faster imaging)</Fit>
          </div>
        </div>
      </div>
      <div className="mt-[17px] flex justify-end gap-[9px] pr-[11px]">
        <div className="flex h-[32px] w-[74px] items-center justify-center rounded-[5px] border-2 border-[#2a8ad4] bg-[#d9e7f3]"><Fit w={30}>Run</Fit></div>
        <div className="flex h-[32px] w-[85px] items-center justify-center rounded-[5px] border-[1.5px] border-[#d0d0d0] bg-[#fcfcfc] pr-[2px]"><Fit w={40}>Close</Fit></div>
      </div>
    </div>
  );
}

export default function App() {
  return (
    <div className="relative flex h-[1338px] w-[1708px] flex-col overflow-hidden bg-[#f0f0f0]">
      <TitleBar />
      <MenuBar />
      <Toolbar />
      <div className="flex h-[1201px] shrink-0">
        <LeftColumn />
        <Editor />
        <SideBar />
      </div>
      <div className="flex flex-1 items-end">
        <div className="h-[5px] w-[946px] border-r border-[#aaa]" />
        <div className="h-[5px] w-[183px] border-r border-[#aaa]" />
        <div className="h-[5px] w-[303px] border-r border-[#aaa]" />
        <div className="ml-[238px] h-[2px] w-[13px] rounded-t-full bg-[#c9604a]" />
      </div>
      <Dialog />
    </div>
  );
}
